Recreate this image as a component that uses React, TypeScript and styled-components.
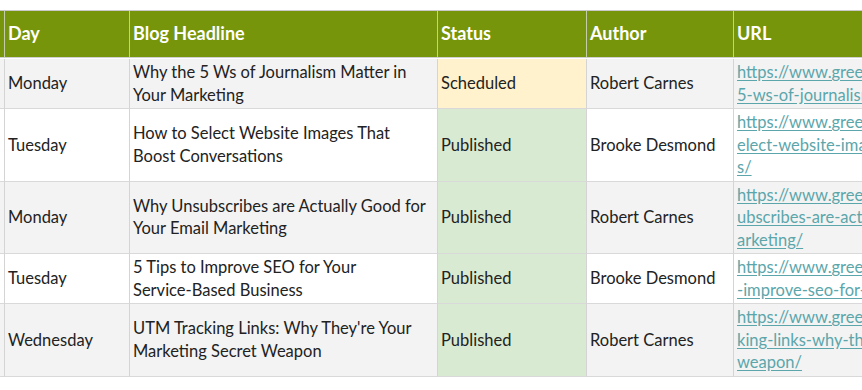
import React from 'react'
import styled, { createGlobalStyle } from 'styled-components'

type Status = 'Scheduled' | 'Published'

type Post = {
  day: string
  headline: React.ReactNode
  status: Status
  author: string
  url: string[]
}

const posts: Post[] = [
  {
    day: 'Monday',
    headline: 'Why the 5 Ws of Journalism Matter in Your Marketing',
    status: 'Scheduled',
    author: 'Robert Carnes',
    url: ['https://www.greenlanemarketing.com/blog/why-the-', '5-ws-of-journalism-matter-in-your-marketing/'],
  },
  {
    day: 'Tuesday',
    headline: 'How to Select Website Images That Boost Conversations',
    status: 'Published',
    author: 'Brooke Desmond',
    url: ['https://www.greenlanemarketing.com/blog/how-to-s', 'elect-website-images-that-boost-conversation', 's/'],
  },
  {
    day: 'Monday',
    headline: 'Why Unsubscribes are Actually Good for Your Email Marketing',
    status: 'Published',
    author: 'Robert Carnes',
    url: ['https://www.greenlanemarketing.com/blog/why-uns', 'ubscribes-are-actually-good-for-your-email-m', 'arketing/'],
  },
  {
    day: 'Tuesday',
    headline: (
      <>
        5 Tips to Improve SEO for Your <NoBreak>Service-Based</NoBreak> Business
      </>
    ),
    status: 'Published',
    author: 'Brooke Desmond',
    url: ['https://www.greenlanemarketing.com/blog/5-tips-to', '-improve-seo-for-your-service-based-business/'],
  },
  {
    day: 'Wednesday',
    headline: "UTM Tracking Links: Why They're Your Marketing Secret Weapon",
    status: 'Published',
    author: 'Robert Carnes',
    url: ['https://www.greenlanemarketing.com/blog/utm-trac', 'king-links-why-theyre-your-marketing-secret-', 'weapon/'],
  },
]

const statusBg: Record<Status, string> = {
  Scheduled: '#fff2cc',
  Published: '#d9ead3',
}

export default function App() {
  return (
    <>
      <GlobalStyle />
      <Page>
        <Sheet>
          <HeadCell />
          <HeadCell>Day</HeadCell>
          <HeadCell>Blog Headline</HeadCell>
          <HeadCell>Status</HeadCell>
          <HeadCell>Author</HeadCell>
          <HeadCell>URL</HeadCell>
          {posts.map((post, idx) => {
            const bg = idx % 2 === 0 ? '#f3f3f3' : '#ffffff'
            return (
              <React.Fragment key={idx}>
                <Cell $bg={bg} />
                <Cell $bg={bg}>{post.day}</Cell>
                <Cell $bg={bg}>
                  <span>{post.headline}</span>
                </Cell>
                <Cell $bg={statusBg[post.status]}>{post.status}</Cell>
                <Cell $bg={bg}>{post.author}</Cell>
                <Cell $bg={bg}>
                  <Link href="#">
                    {post.url.map((line, i) => (
                      <UrlLine key={i}>{line}</UrlLine>
                    ))}
                  </Link>
                </Cell>
              </React.Fragment>
            )
          })}
        </Sheet>
      </Page>
    </>
  )
}

function NoBreak({ children }: { children: React.ReactNode }) {
  return <Keep>{children}</Keep>
}

const GlobalStyle = createGlobalStyle`
  body {
    margin: 0;
    background: #ffffff;
    font-family: Lato, 'Liberation Sans', sans-serif;
  }
`

const Page = styled.div`
  width: 862px;
  height: 390px;
  overflow: hidden;
  padding-top: 10px;
  box-sizing: border-box;
`

const Sheet = styled.div`
  display: grid;
  grid-template-columns: 4px 125px 308px 149px 147px 240px;
  grid-template-rows: 48px;
  width: max-content;
  border-top: 1px solid #c9c9c9;
`

const HeadCell = styled.div`
  display: flex;
  align-items: center;
  padding: 0 3px 3px 3px;
  height: 47px;
  box-sizing: border-box;
  background: #77950a;
  color: #ffffff;
  font-size: 18px;
  font-weight: 700;
  border-left: 1px solid #c4cca8;
  border-bottom: 1px solid #d0d0d0;
  white-space: nowrap;
  overflow: hidden;

  &:first-child {
    border-left: none;
    padding: 0;
  }
`

const Cell = styled.div<{ $bg: string }>`
  display: flex;
  align-items: center;
  padding: 2px 3px;
  background: ${(p) => p.$bg};
  color: #222222;
  font-size: 16.5px;
  line-height: 22.5px;
  border-left: 1px solid #d4d4d4;
  border-bottom: 1px solid #d9d9d9;
  overflow: hidden;

  &:nth-child(6n + 1) {
    border-left: none;
    padding: 0;
  }
`

const Keep = styled.span`
  white-space: nowrap;
`

const Link = styled.a`
  display: flex;
  flex-direction: column;
  color: #5ba6ab;
  text-decoration: underline;
  text-underline-offset: 2px;
`

const UrlLine = styled.span`
  white-space: nowrap;
`
